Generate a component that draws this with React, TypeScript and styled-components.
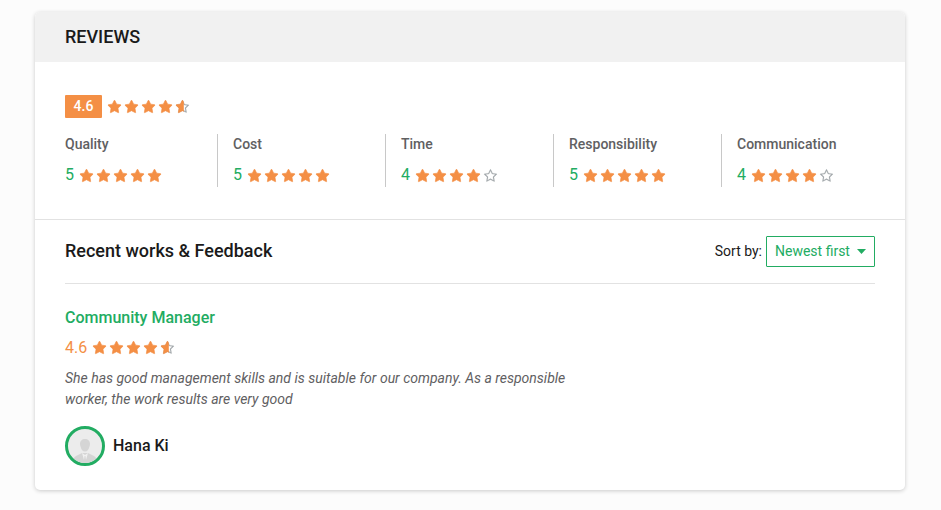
import React from "react";
import styled, { createGlobalStyle } from "styled-components";

const GlobalStyle = createGlobalStyle`
  *, *::before, *::after { box-sizing: border-box; }
  body {
    margin: 0;
    background: #fcfcfc;
    color: #1a1a1a;
    font-family: Roboto, sans-serif;
    font-size: 14px;
    line-height: 20px;
  }
  h2, h3, h4, p { margin: 0; }
`;

const Page = styled.main`
  padding: 12px 36px 20px 35px;
`;

const Card = styled.section`
  background: #fff;
  border-radius: 5px;
  box-shadow: 0 1px 4px rgba(0, 0, 0, 0.2);
  overflow: hidden;
`;

const CardHeader = styled.header`
  background: #f1f1f1;
  padding: 13px 30px;
`;

const Title = styled.h2`
  font-size: 18px;
  line-height: 24px;
  font-weight: 500;
`;

const Summary = styled.div`
  padding: 33px 30px 32px;
  border-bottom: 1px solid #e2e2e2;
`;

const RatingLine = styled.div`
  display: flex;
  align-items: center;
  gap: 6px;
`;

const Badge = styled.span`
  min-width: 37px;
  padding: 1px 8px 2px;
  border-radius: 1px;
  background: #f48f45;
  color: #fff;
  font-weight: 500;
  text-align: center;
`;

const Score = styled.span<{ $tone: "green" | "orange" }>`
  color: ${({ $tone }) => ($tone === "green" ? "#22ac62" : "#f48f45")};
  font-size: 16px;
  line-height: 22px;
`;

const StarRow = styled.span<{ $level?: boolean }>`
  display: flex;
  gap: 4px;
  padding-top: ${({ $level }) => ($level ? "0" : "1px")};
`;

const StarIcon = styled.svg`
  display: block;
  width: 13px;
  height: 14px;
  overflow: visible;
`;

const Criteria = styled.div`
  display: grid;
  grid-template-columns: repeat(5, 1fr);
  margin: 16px -15px 0;
`;

const Criterion = styled.div`
  padding: 0 15px 1px;
  border-right: 1px solid #c8c8c8;

  &:last-child { border-right: 0; }
`;

const CriterionName = styled.h4`
  margin-bottom: 10px;
  color: #5f6062;
  font-size: 14px;
  line-height: 20px;
  font-weight: 500;
`;

const Feedback = styled.div`
  padding: 16px 30px 24px;
`;

const FeedbackHeader = styled.div`
  display: flex;
  align-items: center;
  justify-content: space-between;
  padding-bottom: 16px;
  border-bottom: 1px solid #e2e2e2;
`;

const FeedbackTitle = styled.h3`
  padding-bottom: 2px;
  font-size: 18px;
  line-height: 24px;
  font-weight: 500;
`;

const Sort = styled.div`
  display: flex;
  align-items: center;
  gap: 4px;
`;

const SortLabel = styled.label`
  padding-bottom: 2px;
`;

const SelectBox = styled.span`
  position: relative;
  display: block;
`;

const Select = styled.select`
  display: block;
  width: 109px;
  height: 31px;
  padding: 0 24px 2px 8px;
  appearance: none;
  border: 1px solid #22ac62;
  border-radius: 1px;
  background: #fff;
  color: #22ac62;
  font: 400 14px/20px Roboto, sans-serif;
`;

const Caret = styled.svg`
  position: absolute;
  right: 9px;
  top: 13px;
  width: 9px;
  height: 5px;
  pointer-events: none;
`;

const JobTitle = styled.h4`
  margin: 22px 0 7px;
  font-size: 16px;
  line-height: 24px;
  font-weight: 500;
`;

const JobLink = styled.a`
  color: #22ac62;
  text-decoration: none;
`;

const Comment = styled.p`
  max-width: 540px;
  margin: 9px 0 16px;
  color: #5f6062;
  font-style: italic;
  line-height: 21px;
`;

const Reviewer = styled.div`
  display: flex;
  align-items: center;
  gap: 8px;
  font-size: 16px;
  font-weight: 500;
`;

const Avatar = styled.svg`
  display: block;
  width: 40px;
  height: 40px;
  border: 3px solid #22ac62;
  border-radius: 50%;
  background: #ececec;
`;

const FULL_STAR =
  "M1728 647q0 22-26 48l-363 354 86 500q1 7 1 20 0 21-10.5 35.5t-30.5 14.5q-19 0-40-12l-449-236-449 236q-22 12-40 12-21 0-31.5-14.5t-10.5-35.5q0-6 2-20l86-500-364-354q-25-27-25-48 0-37 56-46l502-73 225-455q19-41 49-41t49 41l225 455 502 73q56 9 56 46z";
const EMPTY_STAR =
  "M1201 1004l306-297-422-62-189-382-189 382-422 62 306 297-73 421 378-199 377 199zm527-357q0 22-26 48l-363 354 86 500q1 7 1 20 0 50-41 50-19 0-40-12l-449-236-449 236q-22 12-40 12-21 0-31.5-14.5t-10.5-35.5q0-6 2-20l86-500-364-354q-25-27-25-48 0-37 56-46l502-73 225-455q19-41 49-41t49 41l225 455 502 73q56 9 56 46z";

function Star({ fill }: { fill: number }) {
  const id = React.useId();
  return (
    <StarIcon viewBox="64 0 1664 1792" aria-hidden="true">
      {fill < 1 && (
        <path d={EMPTY_STAR} fill="#a3a8ac" stroke="#a3a8ac" strokeWidth="20" />
      )}
      {fill > 0 && (
        <>
          <clipPath id={id}>
            <rect x="0" y="0" width={fill < 1 ? 64 + 1664 * fill : 1792} height="1792" />
          </clipPath>
          <path
            d={FULL_STAR}
            fill="#f48f45"
            stroke="#f48f45"
            strokeWidth="80"
            clipPath={`url(#${id})`}
          />
        </>
      )}
    </StarIcon>
  );
}

function Stars({ value, level }: { value: number; level?: boolean }) {
  return (
    <StarRow $level={level} role="img" aria-label={`${value} out of 5 stars`}>
      {[0, 1, 2, 3, 4].map((i) => (
        <Star key={i} fill={Math.max(0, Math.min(1, value - i))} />
      ))}
    </StarRow>
  );
}

const criteria = [
  { name: "Quality", score: 5 },
  { name: "Cost", score: 5 },
  { name: "Time", score: 4 },
  { name: "Responsibility", score: 5 },
  { name: "Communication", score: 4 },
];

export default function App() {
  return (
    <>
      <GlobalStyle />
      <Page>
        <Card>
          <CardHeader>
            <Title>REVIEWS</Title>
          </CardHeader>
          <Summary>
            <RatingLine>
              <Badge>4.6</Badge>
              <Stars value={4.6} />
            </RatingLine>
            <Criteria>
              {criteria.map(({ name, score }) => (
                <Criterion key={name}>
                  <CriterionName>{name}</CriterionName>
                  <RatingLine>
                    <Score $tone="green">{score}</Score>
                    <Stars value={score} />
                  </RatingLine>
                </Criterion>
              ))}
            </Criteria>
          </Summary>
          <Feedback>
            <FeedbackHeader>
              <FeedbackTitle>Recent works &amp; Feedback</FeedbackTitle>
              <Sort>
                <SortLabel htmlFor="sort">Sort by:</SortLabel>
                <SelectBox>
                  <Select id="sort" defaultValue="newest">
                    <option value="newest">Newest first</option>
                    <option value="oldest">Oldest first</option>
                  </Select>
                  <Caret viewBox="0 0 9 5" aria-hidden="true">
                    <path d="M0 0h9L4.5 5z" fill="#22ac62" />
                  </Caret>
                </SelectBox>
              </Sort>
            </FeedbackHeader>
            <JobTitle>
              <JobLink href="#community-manager">Community Manager</JobLink>
            </JobTitle>
            <RatingLine>
              <Score $tone="orange">4.6</Score>
              <Stars value={4.6} level />
            </RatingLine>
            <Comment>
              She has good management skills and is suitable for our company. As a
              responsible worker, the work results are very good
            </Comment>
            <Reviewer>
              <Avatar viewBox="0 0 34 34" aria-hidden="true">
                <path
                  d="M17 10c-3 0-5 2-5 5 0 1 .3 2 .7 3 .5 2.600 2 4.500 4.300 4.500s3.800-1.900 4.300-4.500c.4-1 .7-2 .7-3 0-3-2-5-5-5z"
                  fill="#d5d5d5"
                />
                <path
                  d="M14 24l-6 3c-2 1-3 3-3 7h24c0-4-1-6-3-7l-6-3z"
                  fill="#d5d5d5"
                />
                <path d="M14 24l2 7 .6-4h.8l.6 4 2-7-3 2z" fill="#f0f0f0" />
              </Avatar>
              Hana Ki
            </Reviewer>
          </Feedback>
        </Card>
      </Page>
    </>
  );
}
